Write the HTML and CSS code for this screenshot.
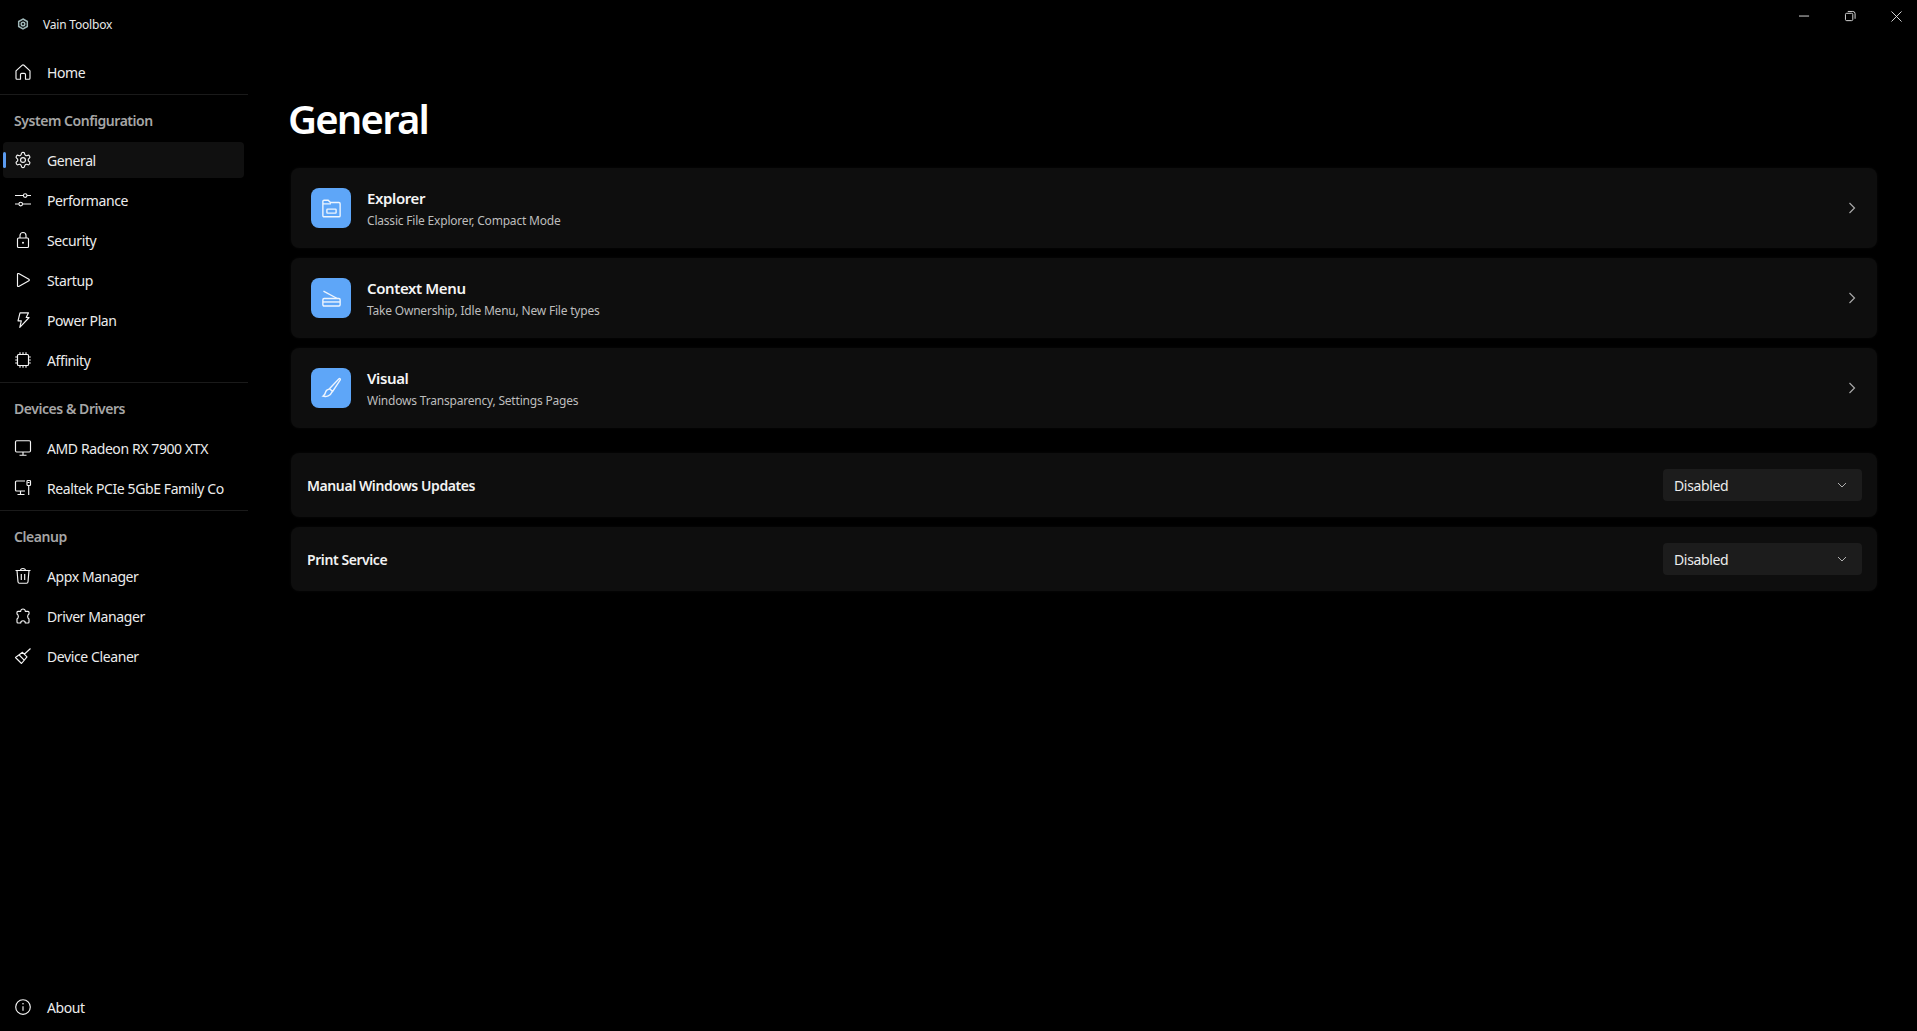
FILE: index.html
```html
<!DOCTYPE html>
<html lang="en">
<head>
  <meta charset="UTF-8">
  <title>Vain Toolbox</title>
  <link rel="stylesheet" href="styles.css">
</head>
<body>
  <div class="app">
    <aside class="sidebar">
      <div class="brand">
        <svg class="brand-icon" viewBox="0 0 12 12"><path d="M6 1l4.300 2.500v5L6 11 1.700 8.500v-5z"/><circle cx="6" cy="6" r="1.800"/></svg>
        <span>Vain Toolbox</span>
      </div>

      <a class="item">
        <svg class="ico" viewBox="0 0 16 16"><path d="M1 6.800L7 1.300a1.500 1.500 0 0 1 2 0l6 5.500v7.400a1 1 0 0 1-1 1h-3.500V10.500a1.200 1.200 0 0 0-1.200-1.200H6.700a1.200 1.200 0 0 0-1.200 1.200v4.700H2a1 1 0 0 1-1-1z"/></svg>
        <span>Home</span>
      </a>
      <div class="sep"></div>

      <div class="section">System Configuration</div>
      <a class="item active">
        <svg class="ico ico-wide" viewBox="1.500 1.500 21 21"><path d="M12.220 2h-.44a2 2 0 0 0-2 2v.18a2 2 0 0 1-1 1.730l-.43.25a2 2 0 0 1-2 0l-.15-.08a2 2 0 0 0-2.730.73l-.22.38a2 2 0 0 0 .73 2.730l.15.1a2 2 0 0 1 1 1.720v.51a2 2 0 0 1-1 1.740l-.15.09a2 2 0 0 0-.73 2.730l.22.38a2 2 0 0 0 2.730.73l.15-.08a2 2 0 0 1 2 0l.43.25a2 2 0 0 1 1 1.730V20a2 2 0 0 0 2 2h.44a2 2 0 0 0 2-2v-.18a2 2 0 0 1 1-1.730l.43-.25a2 2 0 0 1 2 0l.15.08a2 2 0 0 0 2.730-.73l.22-.39a2 2 0 0 0-.73-2.730l-.15-.08a2 2 0 0 1-1-1.740v-.5a2 2 0 0 1 1-1.740l.15-.09a2 2 0 0 0 .73-2.730l-.22-.38a2 2 0 0 0-2.730-.73l-.15.08a2 2 0 0 1-2 0l-.43-.25a2 2 0 0 1-1-1.730V4a2 2 0 0 0-2-2z"/><circle cx="12" cy="12" r="3.200"/></svg>
        <span>General</span>
      </a>
      <a class="item">
        <svg class="ico" viewBox="0 0 16 16"><path d="M0 3.500h8.300M12 3.500h4M0 12h3.800M7.500 12H16"/><circle cx="10.200" cy="3.500" r="1.800"/><circle cx="5.700" cy="12" r="1.800"/></svg>
        <span>Performance</span>
      </a>
      <a class="item">
        <svg class="ico" viewBox="0 0 16 16"><rect x="2.500" y="6" width="11" height="9.500" rx="1"/><path d="M5 6V3.500a3 3 0 0 1 6 0V6"/><circle class="dot" cx="8" cy="10.800" r="1"/></svg>
        <span>Security</span>
      </a>
      <a class="item">
        <svg class="ico" viewBox="0 0 16 16"><path d="M2.500 2.300a.8.800 0 0 1 1.200-.7l10.200 5.700a.8.800 0 0 1 0 1.400L3.700 14.400a.8.800 0 0 1-1.200-.7z"/></svg>
        <span>Startup</span>
      </a>
      <a class="item">
        <svg class="ico" viewBox="0 0 16 16"><path d="M5 .8h8.500l-2.300 4.700h2.900L4.800 15.300l1.500-6.500H3z"/></svg>
        <span>Power Plan</span>
      </a>
      <a class="item">
        <svg class="ico" viewBox="0 0 16 16"><rect x="2.500" y="2.500" width="11" height="11" rx="1"/><path d="M5 .2v2.300M8 .2v2.300M11 .2v2.300M5 13.500v2.300M8 13.500v2.300M11 13.500v2.300M.2 5h2.300M.2 8h2.300M.2 11h2.300M13.500 5h2.300M13.500 8h2.300M13.500 11h2.300"/></svg>
        <span>Affinity</span>
      </a>
      <div class="sep"></div>

      <div class="section">Devices &amp; Drivers</div>
      <a class="item">
        <svg class="ico" viewBox="0 0 16 16"><rect x=".5" y=".7" width="15" height="11.300" rx="1.200"/><path d="M8 12v3M4.500 15.200h7"/></svg>
        <span>AMD Radeon RX 7900 XTX</span>
      </a>
      <a class="item">
        <svg class="ico" viewBox="0 0 16 16"><path d="M10 1H1.500a1 1 0 0 0-1 1v8a1 1 0 0 0 1 1H10M5.500 11v3.500M2.500 14.500h7"/><rect x="12" y=".5" width="3.500" height="5" rx=".8"/><path d="M13.700 5.500V15M12.500 2.500h2"/></svg>
        <span>Realtek PCIe 5GbE Family Co</span>
      </a>
      <div class="sep"></div>

      <div class="section">Cleanup</div>
      <a class="item">
        <svg class="ico" viewBox="0 0 16 16"><path d="M.5 2.500h15M2 2.500l1 11.300a1.500 1.500 0 0 0 1.500 1.400h7a1.500 1.500 0 0 0 1.500-1.400L14 2.500M5.500 2.500a2.500 2 0 0 1 5 0M6.300 6v6M9.700 6v6"/></svg>
        <span>Appx Manager</span>
      </a>
      <a class="item">
        <svg class="ico" viewBox="0 0 16 16"><path d="M5.700 3.300a2.300 2.300 0 1 1 4.600 0H13a1 1 0 0 1 1 1V6a3 3 0 0 0 0 5v3a1 1 0 0 1-1 1h-2.700a2.300 2.300 0 0 0-4.600 0H3a1 1 0 0 1-1-1v-3a3 3 0 0 0 0-5V4.300a1 1 0 0 1 1-1z"/></svg>
        <span>Driver Manager</span>
      </a>
      <a class="item">
        <svg class="ico" viewBox="0 0 16 16"><path d="M15.500.5L9 6.500M7.500 4.300l4.500 4.500-5.500 6.700-6-6zM4.200 7l4.800 4.800"/></svg>
        <span>Device Cleaner</span>
      </a>

      <a class="item about">
        <svg class="ico" viewBox="0 0 16 16"><circle cx="8" cy="8" r="7.300"/><path d="M8 7.200v4.600"/><circle class="dot" cx="8" cy="4.800" r=".8"/></svg>
        <span>About</span>
      </a>
    </aside>

    <main class="main">
      <div class="caption">
        <div class="cap-btn"><svg class="cap-ico" viewBox="0 0 12 12"><path d="M0 5.500h11"/></svg></div>
        <div class="cap-btn"><svg class="cap-ico" viewBox="0 0 12 12"><rect x=".5" y="2.500" width="8" height="8" rx="1.300"/><path d="M3 .5h5.500A2.500 2.500 0 0 1 11 3v5.500"/></svg></div>
        <div class="cap-btn"><svg class="cap-ico" viewBox="0 0 12 12"><path d="M.5.500l11 11M11.500.500l-11 11"/></svg></div>
      </div>

      <h1 class="title">General</h1>

      <div class="cards">
        <div class="card">
          <div class="tile">
            <svg class="tile-ico" viewBox="0 0 20 20"><path d="M2.500 6V3.800a1 1 0 0 1 1-1h3.600l2 2h7.400a1 1 0 0 1 1 1v10.400a1 1 0 0 1-1 1h-13a1 1 0 0 1-1-1V6h7"/><rect x="6" y="10.500" width="8" height="3.500" rx=".5"/></svg>
          </div>
          <div class="card-text">
            <div class="card-title">Explorer</div>
            <div class="card-sub">Classic File Explorer, Compact Mode</div>
          </div>
          <svg class="chev" viewBox="0 0 8 12"><path d="M1.500 1l5 5-5 5"/></svg>
        </div>
        <div class="card">
          <div class="tile">
            <svg class="tile-ico" viewBox="0 0 20 20"><path d="M3 3.500l12 6.500"/><rect x="2.500" y="10" width="15" height="6.500" rx="1"/><path d="M2.500 13h15"/></svg>
          </div>
          <div class="card-text">
            <div class="card-title">Context Menu</div>
            <div class="card-sub">Take Ownership, Idle Menu, New File types</div>
          </div>
          <svg class="chev" viewBox="0 0 8 12"><path d="M1.500 1l5 5-5 5"/></svg>
        </div>
        <div class="card">
          <div class="tile">
            <svg class="tile-ico" viewBox="0 0 20 20"><path d="M16.500 1.500c.8-.5 1.500.2 1.100 1L11 12.500l-2.800-2.300zM8 10.500c-2.200.3-3 1.500-3.300 3.200-.2 1-.9 2-2.200 3 3 .8 6.800-.2 8-3.800"/></svg>
          </div>
          <div class="card-text">
            <div class="card-title">Visual</div>
            <div class="card-sub">Windows Transparency, Settings Pages</div>
          </div>
          <svg class="chev" viewBox="0 0 8 12"><path d="M1.500 1l5 5-5 5"/></svg>
        </div>
      </div>

      <div class="rows">
        <div class="row">
          <div class="row-label">Manual Windows Updates</div>
          <div class="select">
            <span>Disabled</span>
            <svg class="caret" viewBox="0 0 10 6"><path d="M1 1l4 4 4-4"/></svg>
          </div>
        </div>
        <div class="row">
          <div class="row-label">Print Service</div>
          <div class="select">
            <span>Disabled</span>
            <svg class="caret" viewBox="0 0 10 6"><path d="M1 1l4 4 4-4"/></svg>
          </div>
        </div>
      </div>
    </main>
  </div>
</body>
</html>
```

FILE: styles.css
```css
* { box-sizing:border-box; }
html, body { height:100%; }
body { margin:0; background:#000; color:#f2f2f2; font-family:'Noto Sans', 'Open Sans', Arial, sans-serif; font-size:14px; overflow:hidden; }
.app { display:flex; height:100%; }

/* sidebar */
.sidebar { width:250px; flex:none; display:flex; flex-direction:column; padding-bottom:6px; }
.brand { height:54px; flex:none; display:flex; align-items:flex-start; padding:17px 0 0 17px; font-size:12px; line-height:16px; gap:14px; color:#e8e8e8; letter-spacing:-0.2px; }
.brand-icon { width:12px; height:12px; margin-top:1px; fill:none; stroke:#9fb7b8; stroke-width:1.500; }
.item { position:relative; display:flex; align-items:center; height:36px; flex:none; margin:0 6px 4px 3px; padding-left:12px; gap:16px; border-radius:4px; color:#ececec; letter-spacing:-0.4px; }
.item.active { background:#101010; }
.item.active::before { content:''; position:absolute; left:0; top:10px; width:3px; height:16px; border-radius:2px; background:#5b9bf0; }
.item.about { margin-top:auto; margin-bottom:0; }
.ico { width:16px; height:16px; flex:none; fill:none; stroke:#f5f5f5; stroke-width:1.150; stroke-linejoin:round; overflow:visible; }
.ico-wide { stroke-width:1.500; }
.ico .dot { fill:#f5f5f5; stroke:none; }
.sep { height:1px; flex:none; background:#1a1a1a; margin-right:2px; }
.section { height:47px; flex:none; padding:16px 0 0 14px; line-height:20px; font-weight:600; color:#a6a6a6; letter-spacing:-0.45px; }

/* content */
.main { flex:1; min-width:0; padding:0 40px 0 41px; }
.caption { display:flex; justify-content:flex-end; gap:4px; height:32px; margin-right:-40px; }
.cap-btn { width:42px; height:32px; display:flex; align-items:center; justify-content:center; }
.cap-ico { width:11px; height:11px; fill:none; stroke:#e6e6e6; stroke-width:1; overflow:visible; }
.title { margin:60px 0 22px -3px; font-size:40px; line-height:54px; font-weight:600; color:#fff; letter-spacing:-1.8px; }

.cards { display:flex; flex-direction:column; gap:10px; }
.card { display:flex; align-items:center; height:80px; padding:0 20px; background:#0e0e0e; border-radius:8px; box-shadow:0 0 3px #0a0a0a; }
.tile { width:40px; height:40px; flex:none; display:flex; align-items:center; justify-content:center; background:#5ea6f8; border-radius:8px; }
.tile-ico { width:23px; height:23px; fill:none; stroke:#eef5fe; stroke-width:1.200; }
.card-text { flex:1; margin-left:16px; }
.card-title { font-size:15px; line-height:20px; font-weight:600; color:#f5f5f5; letter-spacing:-0.38px; }
.card-sub { margin-top:5px; font-size:12px; line-height:16px; color:#bdbdbd; letter-spacing:-0.2px; }
.chev { width:8px; height:12px; flex:none; margin-right:1px; fill:none; stroke:#a8a8a8; stroke-width:1.200; }

.rows { display:flex; flex-direction:column; gap:10px; margin-top:25px; }
.row { display:flex; align-items:center; justify-content:space-between; height:64px; padding:0 15px 0 16px; background:#0e0e0e; border-radius:8px; box-shadow:0 0 3px #0a0a0a; }
.row-label { font-weight:600; color:#f2f2f2; letter-spacing:-0.42px; padding-top:1px; }
.select { width:199px; height:32px; display:flex; align-items:center; justify-content:space-between; padding:0 15px 0 11px; background:#1c1c1c; border-radius:4px; color:#ececec; letter-spacing:-0.35px; }
.caret { width:10px; height:6px; fill:none; stroke:#b0b0b0; stroke-width:1; }
```
